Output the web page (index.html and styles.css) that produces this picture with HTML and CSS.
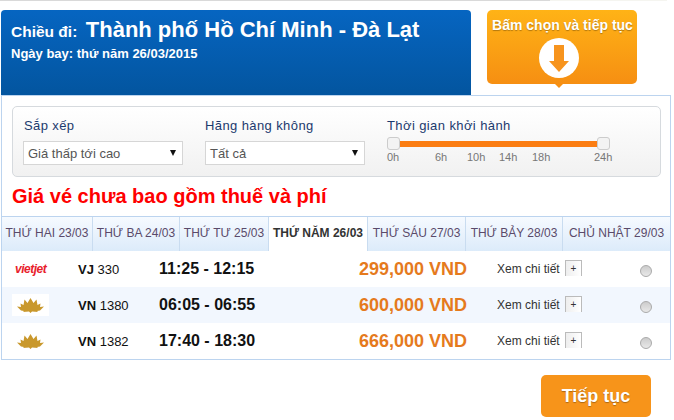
FILE: index.html
```html
<!DOCTYPE html>
<html lang="en">
<head>
    <meta charset="UTF-8">
    <title>Chọn chuyến bay</title>
    <link rel="stylesheet" href="styles.css">
</head>
<body>
<div class="top-line"></div>
<div class="top">
    <div class="route">
        <div class="route-title"><span class="route-label">Chiều đi:</span> <span class="route-name">Thành phố Hồ Chí Minh - Đà Lạt</span></div>
        <div class="route-date">Ngày bay: thứ năm 26/03/2015</div>
    </div>
    <div class="hint">
        <div class="hint-text">Bấm chọn và tiếp tục</div>
        <svg class="hint-icon" width="40" height="40" viewBox="0 0 40 40">
            <circle cx="20" cy="20" r="20" fill="#fff"/>
            <path d="M15 7h10v16h5L20 34 10 23h5z" fill="#f7941d"/>
        </svg>
    </div>
</div>

<div class="panel">
    <div class="filters">
        <div class="filter filter-sort">
            <div class="filter-label">Sắp xếp</div>
            <div class="select"><span>Giá thấp tới cao</span><i class="caret"></i></div>
        </div>
        <div class="filter filter-air">
            <div class="filter-label">Hãng hàng không</div>
            <div class="select"><span>Tất cả</span><i class="caret"></i></div>
        </div>
        <div class="filter filter-time">
            <div class="filter-label">Thời gian khởi hành</div>
            <div class="slider">
                <span class="knob"></span>
                <span class="slider-bar"></span>
                <span class="knob"></span>
            </div>
            <div class="ticks">
                <span class="tick-a">0h</span>
                <span class="tick-b">6h</span>
                <span class="tick-c">10h</span>
                <span class="tick-d">14h</span>
                <span class="tick-e">18h</span>
                <span class="tick-f">24h</span>
            </div>
        </div>
    </div>

    <h2 class="notice">Giá vé chưa bao gồm thuế và phí</h2>

    <div class="tabs">
        <div class="tab tab-1">THỨ HAI 23/03</div>
        <div class="tab tab-2">THỨ BA 24/03</div>
        <div class="tab tab-3">THỨ TƯ 25/03</div>
        <div class="tab tab-4 active">THỨ NĂM 26/03</div>
        <div class="tab tab-5">THỨ SÁU 27/03</div>
        <div class="tab tab-6">THỨ BẢY 28/03</div>
        <div class="tab tab-7">CHỦ NHẬT 29/03</div>
    </div>

    <div class="row">
        <div class="logo"><span class="vietjet">vietjet</span></div>
        <div class="code"><b>VJ</b> 330</div>
        <div class="time">11:25 - 12:15</div>
        <div class="price">299,000 VND</div>
        <div class="detail">Xem chi tiết</div>
        <div class="plus">+</div>
        <div class="radio"></div>
    </div>
    <div class="row row-alt">
        <div class="logo"><span class="lotus-box">
            <svg width="27" height="15" viewBox="0 0 27 15"><path fill="#c9982c" d="M13.500 0L16.500 5 19.500 1.500 20.500 7 23.500 5.500 23 9 27 8.500 23 12.500 20 13 21 14 15 13.500 13.500 15 12 13.500 6 14 7 13 4 12.500 0 8.500 4 9 3.500 5.500 6.500 7 7.500 1.500 10.500 5z"/></svg>
        </span></div>
        <div class="code"><b>VN</b> 1380</div>
        <div class="time">06:05 - 06:55</div>
        <div class="price">600,000 VND</div>
        <div class="detail">Xem chi tiết</div>
        <div class="plus">+</div>
        <div class="radio"></div>
    </div>
    <div class="row">
        <div class="logo"><span class="lotus-box">
            <svg width="27" height="15" viewBox="0 0 27 15"><path fill="#c9982c" d="M13.500 0L16.500 5 19.500 1.500 20.500 7 23.500 5.500 23 9 27 8.500 23 12.500 20 13 21 14 15 13.500 13.500 15 12 13.500 6 14 7 13 4 12.500 0 8.500 4 9 3.500 5.500 6.500 7 7.500 1.500 10.500 5z"/></svg>
        </span></div>
        <div class="code"><b>VN</b> 1382</div>
        <div class="time">17:40 - 18:30</div>
        <div class="price">666,000 VND</div>
        <div class="detail">Xem chi tiết</div>
        <div class="plus">+</div>
        <div class="radio"></div>
    </div>
</div>

<div class="actions">
    <button class="next">Tiếp tục</button>
</div>
</body>
</html>
```

FILE: styles.css
```css
body {
    font-family: "Liberation Sans", Arial, sans-serif;
    margin: 0;
    padding: 0;
    background: #fff;
    width: 674px;
    height: 420px;
    overflow: hidden;
}
.top-line {
    width: 667px;
    height: 1px;
    background: linear-gradient(90deg, #d9d9d9 550px, #f5f5f0 550px);
}
.top {
    display: flex;
    height: 85px;
    margin-top: 9px;
    padding-left: 1px;
}
.route {
    width: 470px;
    background: linear-gradient(#0665c1, #03559f);
    border-radius: 4px 4px 0 0;
    color: #fff;
    padding-top: 7px;
    padding-left: 10px;
    box-sizing: border-box;
}
.route-label {
    font-size: 15.500px;
    font-weight: bold;
}
.route-name {
    font-size: 22px;
    font-weight: bold;
    margin-left: 4px;
}
.route-date {
    font-size: 13px;
    font-weight: bold;
    margin-top: 3px;
}
.hint {
    position: relative;
    width: 150px;
    height: 74px;
    margin-left: 16px;
    background: linear-gradient(#ffb316, #f68f12);
    border-radius: 5px;
    text-align: center;
    color: #fff;
}
.hint::after {
    content: "";
    position: absolute;
    left: 67px;
    bottom: -4px;
    border-left: 5px solid transparent;
    border-right: 5px solid transparent;
    border-top: 5px solid #f68f12;
}
.hint-text {
    font-size: 14px;
    line-height: 16px;
    font-weight: bold;
    padding: 7px 0 0 1px;
    text-shadow: 0 1px 1px rgba(0, 0, 0, .3);
}
.hint-icon {
    display: block;
    margin: 5px 0 0 52px;
}
.panel {
    width: 670px;
    height: 265px;
    margin-left: 1px;
    border: 1px solid #bcd4ef;
    box-sizing: border-box;
    padding-top: 10px;
}
.filters {
    display: flex;
    width: 649px;
    height: 71px;
    margin-left: 10px;
    border: 1px solid #d6dade;
    border-radius: 5px;
    box-sizing: border-box;
    background: linear-gradient(#fff, #f1f1f1);
    padding: 11px 0 0 11px;
}
.filter-label {
    font-size: 13px;
    color: #1c3a6e;
    line-height: 16px;
    letter-spacing: .4px;
}
.filter-sort {
    width: 181px;
}
.filter-air {
    width: 182px;
}
.select {
    display: flex;
    justify-content: space-between;
    align-items: center;
    width: 160px;
    height: 24px;
    margin-top: 7px;
    background: #fff;
    border: 1px solid #d6d6d6;
    box-sizing: border-box;
    padding: 0 6px 0 4px;
    font-size: 13px;
    color: #555;
}
.filter-sort .select {
    margin-left: -1px;
}
.caret {
    border-left: 3.500px solid transparent;
    border-right: 3.500px solid transparent;
    border-top: 6px solid #111;
}
.slider {
    display: flex;
    align-items: center;
    width: 223px;
    margin-top: 3px;
}
.knob {
    width: 13px;
    height: 13px;
    background: #f3f3f3;
    border: 1px solid #ccc;
    border-radius: 3px;
    box-sizing: border-box;
    flex: none;
}
.slider-bar {
    flex: 1;
    height: 6px;
    background: #fb7d12;
}
.ticks {
    position: relative;
    height: 14px;
    margin-top: 1px;
    font-size: 11px;
    color: #777;
}
.ticks span {
    position: absolute;
    top: 0;
}
.tick-a { left: 0; }
.tick-b { left: 48px; }
.tick-c { left: 80px; }
.tick-d { left: 112px; }
.tick-e { left: 145px; }
.tick-f { left: 207px; }
.notice {
    margin: 7px 0 0 10px;
    font-size: 20px;
    line-height: 24px;
    font-weight: bold;
    color: #f00;
    height: 32px;
}
.tabs {
    display: flex;
    height: 35px;
    border-top: 1px solid #bcd4ef;
    box-sizing: border-box;
}
.tab {
    background: linear-gradient(#f6faff, #dcebfa);
    border-right: 1px solid #c9dcf0;
    box-sizing: border-box;
    font-size: 12px;
    line-height: 33px;
    color: #5a4a6a;
    text-align: center;
    white-space: nowrap;
}
.tab-1 { width: 91px; }
.tab-2 { width: 87px; }
.tab-3 { width: 89px; }
.tab-4 { width: 99px; }
.tab-5 { width: 98px; }
.tab-6 { width: 97px; }
.tab-7 { width: 107px; border-right: none; }
.tab.active {
    background: #fff;
    color: #333;
    font-weight: bold;
}
.row {
    display: flex;
    align-items: center;
    height: 36px;
    background: #fff;
}
.row-alt {
    background: #f2f7fe;
}
.logo {
    width: 76px;
    display: flex;
    padding-left: 10px;
    box-sizing: border-box;
}
.vietjet {
    margin-left: 3px;
    font-size: 12px;
    font-weight: bold;
    font-style: italic;
    color: #e8202a;
    letter-spacing: -.5px;
}
.lotus-box {
    display: flex;
    align-items: center;
    justify-content: center;
    width: 37px;
    height: 22px;
    background: #fff;
}
.code {
    width: 81px;
    font-size: 13px;
    color: #111;
}
.time {
    width: 200px;
    font-size: 16px;
    font-weight: bold;
    color: #111;
}
.price {
    width: 138px;
    font-size: 18px;
    font-weight: bold;
    color: #e57a1d;
}
.detail {
    width: 68px;
    font-size: 12px;
    color: #333;
}
.plus {
    width: 17px;
    height: 16px;
    border: 1px solid #bbb;
    border-bottom: none;
    box-sizing: border-box;
    background: linear-gradient(90deg, #eee, #fff);
    font-size: 10px;
    line-height: 15px;
    text-align: center;
    color: #333;
    margin-top: -2px;
}
.radio {
    width: 12px;
    height: 12px;
    margin-left: 58px;
    margin-top: 4px;
    border: 1px solid #aaa;
    border-radius: 50%;
    box-sizing: border-box;
    background: linear-gradient(#ccc, #e8e8e8);
}
.actions {
    display: flex;
    justify-content: flex-end;
    padding: 15px 23px 0 0;
}
.next {
    width: 110px;
    height: 42px;
    padding: 0;
    border: none;
    border-radius: 5px;
    background: #f7941a;
    color: #fff;
    font-family: inherit;
    font-size: 18px;
    font-weight: bold;
    text-shadow: 0 1px 1px rgba(0, 0, 0, .3);
    cursor: pointer;
}
```
